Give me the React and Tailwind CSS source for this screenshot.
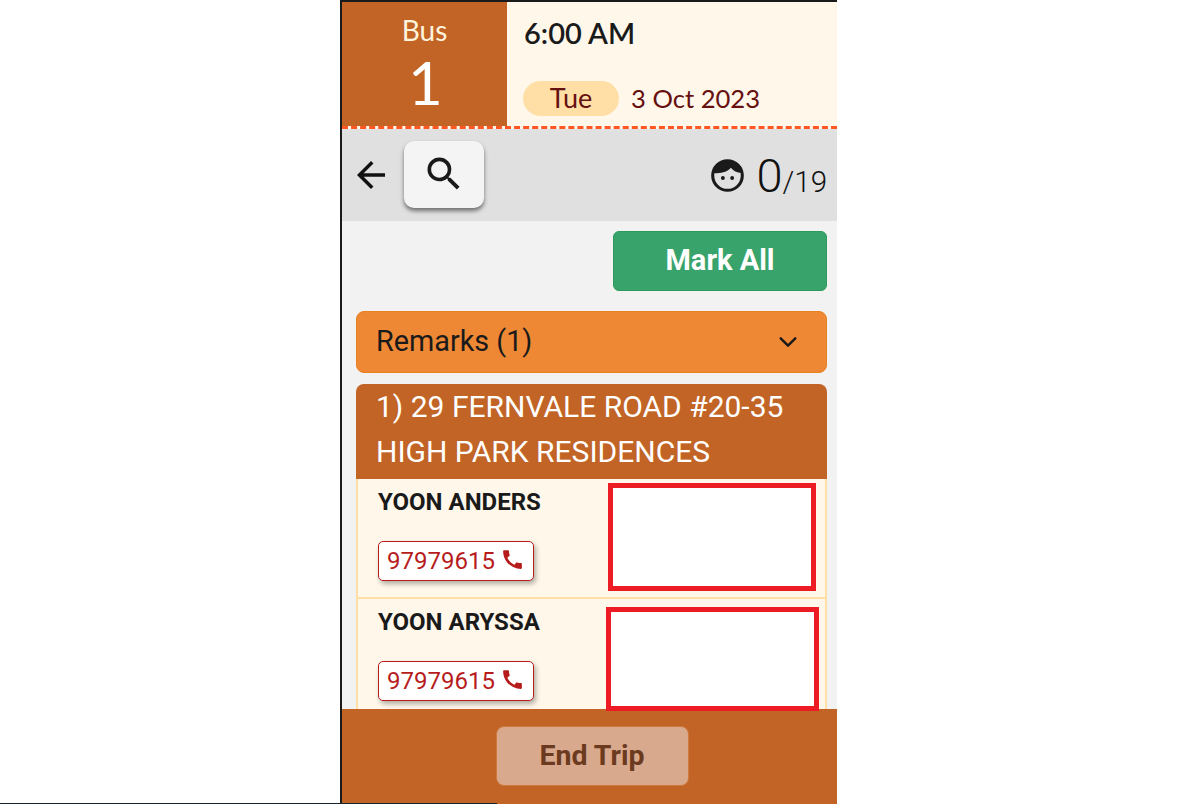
import React from 'react';
import { MdCall, MdArrowBack, MdSearch } from 'react-icons/md';
import { IoChevronDown } from 'react-icons/io5';

const riders = [
  { name: 'YOON ANDERS', phone: '97979615' },
  { name: 'YOON ARYSSA', phone: '97979615' },
];

function FaceIcon() {
  return (
    <svg viewBox="0 0 24 24" className="mr-[10px] h-[37px] w-[37px] self-center" fill="none">
      <circle cx="12" cy="12" r="9.6" stroke="#1a1a1a" strokeWidth="2" />
      <path d="M2.6 10.4A9.6 9.6 0 0 1 21.4 10.4C18 10.4 15.6 9 14.2 7C12 9.6 8 11 2.6 10.4Z" fill="#1a1a1a" />
      <circle cx="9" cy="13.6" r="1.25" fill="#1a1a1a" />
      <circle cx="15" cy="13.6" r="1.25" fill="#1a1a1a" />
    </svg>
  );
}

function Rider({ rider, box }) {
  return (
    <div className="flex h-[120px] shrink-0 border-b-2 border-[#ffdfa6] bg-[#fff7ea]">
      <div className="flex-1 pl-5 pt-[9px]">
        <div className="text-[24px] leading-[29px] font-bold text-[#1a1a1a]">{rider.name}</div>
        <a className="mt-[24px] flex h-[40px] w-[156px] items-center rounded-[5px] border border-[#b71c1c] bg-white pl-[8px] text-[24px] text-[#b71c1c] shadow-[2px_3px_5px_rgba(0,0,0,0.3)]">
          {rider.phone}
          <MdCall className="ml-[5px] mb-1 text-[25px]" />
        </a>
      </div>
      {box}
    </div>
  );
}

export default function App() {
  return (
    <div className="relative h-[804px] w-[1198px] overflow-hidden bg-white font-['Roboto',sans-serif]">
      <div className="ml-[340px] flex h-[804px] w-[497px] flex-col overflow-hidden border-l-2 border-t-2 border-[#1a1a1a] bg-[#f2f2f2]">
        {/* trip header */}
        <div className="flex h-[127px] shrink-0 border-b-[3px] border-dashed border-[#ff5722] bg-[#fff7ea] font-['Lato',sans-serif]">
          <div className="flex w-[165px] flex-col items-center bg-[#c16426] text-white">
            <span className="mt-[11px] text-[28px] leading-[34px] text-[#fff3dc]">Bus</span>
            <span className="ml-[2px] mt-[5px] text-[60px] leading-[60px]">1</span>
          </div>
          <div className="flex-1 pl-[17px]">
            <div className="mt-[13px] text-[29px] leading-[36px] font-semibold text-[#1a1a1a]">6:00 AM</div>
            <div className="mt-[28px] flex items-center text-[#661010]">
              <span className="-ml-px flex h-[35px] w-[96px] items-center justify-center rounded-full bg-[#ffdfa6] text-[27px]">Tue</span>
              <span className="ml-[12px] text-[25.6px]">3 Oct 2023</span>
            </div>
          </div>
        </div>

        {/* toolbar */}
        <div className="flex h-[92px] shrink-0 items-center bg-[#e0e0e0] pl-[8px] pr-[10px]">
          <MdArrowBack className="text-[42px] text-[#111]" />
          <button className="mb-[2px] ml-[12px] flex h-[67px] w-[80px] items-center justify-center rounded-[10px] bg-[#f4f4f4] shadow-[0_3px_4px_rgba(0,0,0,0.5)]">
            <MdSearch className="text-[44px] text-[#1a1a1a]" />
          </button>
          <div className="ml-auto flex items-baseline text-[#111]">
            <FaceIcon />
            <span className="text-[47px] leading-none font-light">0</span>
            <span className="text-[29.5px] leading-none font-light">/19</span>
          </div>
        </div>

        {/* list */}
        <div className="flex min-h-0 flex-1 flex-col pl-[14px] pr-[10px]">
          <div className="mt-[10px] flex shrink-0 justify-end">
            <button className="h-[60px] w-[214px] rounded-[6px] border border-[#2d9a5c] bg-[#38a36a] text-[29px] font-bold text-white">
              Mark All
            </button>
          </div>
          <div className="mt-[20px] flex h-[62px] shrink-0 items-center justify-between rounded-[8px] border border-[#e8801f] bg-[#ee8835] pl-[19px] pr-[25px] text-[28.8px] text-[#1a1a1a]">
            Remarks (1)
            <IoChevronDown className="text-[26px]" />
          </div>
          <div className="mt-[11px] shrink-0">
            <div className="h-[95px] rounded-t-[8px] bg-[#c16426] pl-[20px] text-[30px] leading-[45px] text-white">
              1) 29 FERNVALE ROAD #20-35
              <br />
              HIGH PARK RESIDENCES
            </div>
            <div className="border-x-2 border-[#ffdfa6]">
              <Rider
                rider={riders[0]}
                box={<div className="mr-[9px] mt-[4px] h-[108px] w-[208px] border-[5px] border-[#ed1c24] bg-white" />}
              />
              <Rider
                rider={riders[1]}
                box={<div className="relative z-10 mr-[6px] mt-[8px] h-[104px] w-[213px] border-[5px] border-[#ed1c24] bg-white" />}
              />
            </div>
          </div>
        </div>

        {/* footer */}
        <div className="relative flex h-[95px] shrink-0 justify-center bg-[#c16426] pl-[5px] pt-[17px]">
          <button className="h-[60px] w-[193px] rounded-[8px] border border-[#cf7a3e] bg-[#d9a98d] text-[28.5px] font-bold text-[#6b3a1f]">
            End Trip
          </button>
        </div>
      </div>
      <div className="absolute bottom-0 left-0 h-px w-[497px] bg-[#16262c]" />
    </div>
  );
}
